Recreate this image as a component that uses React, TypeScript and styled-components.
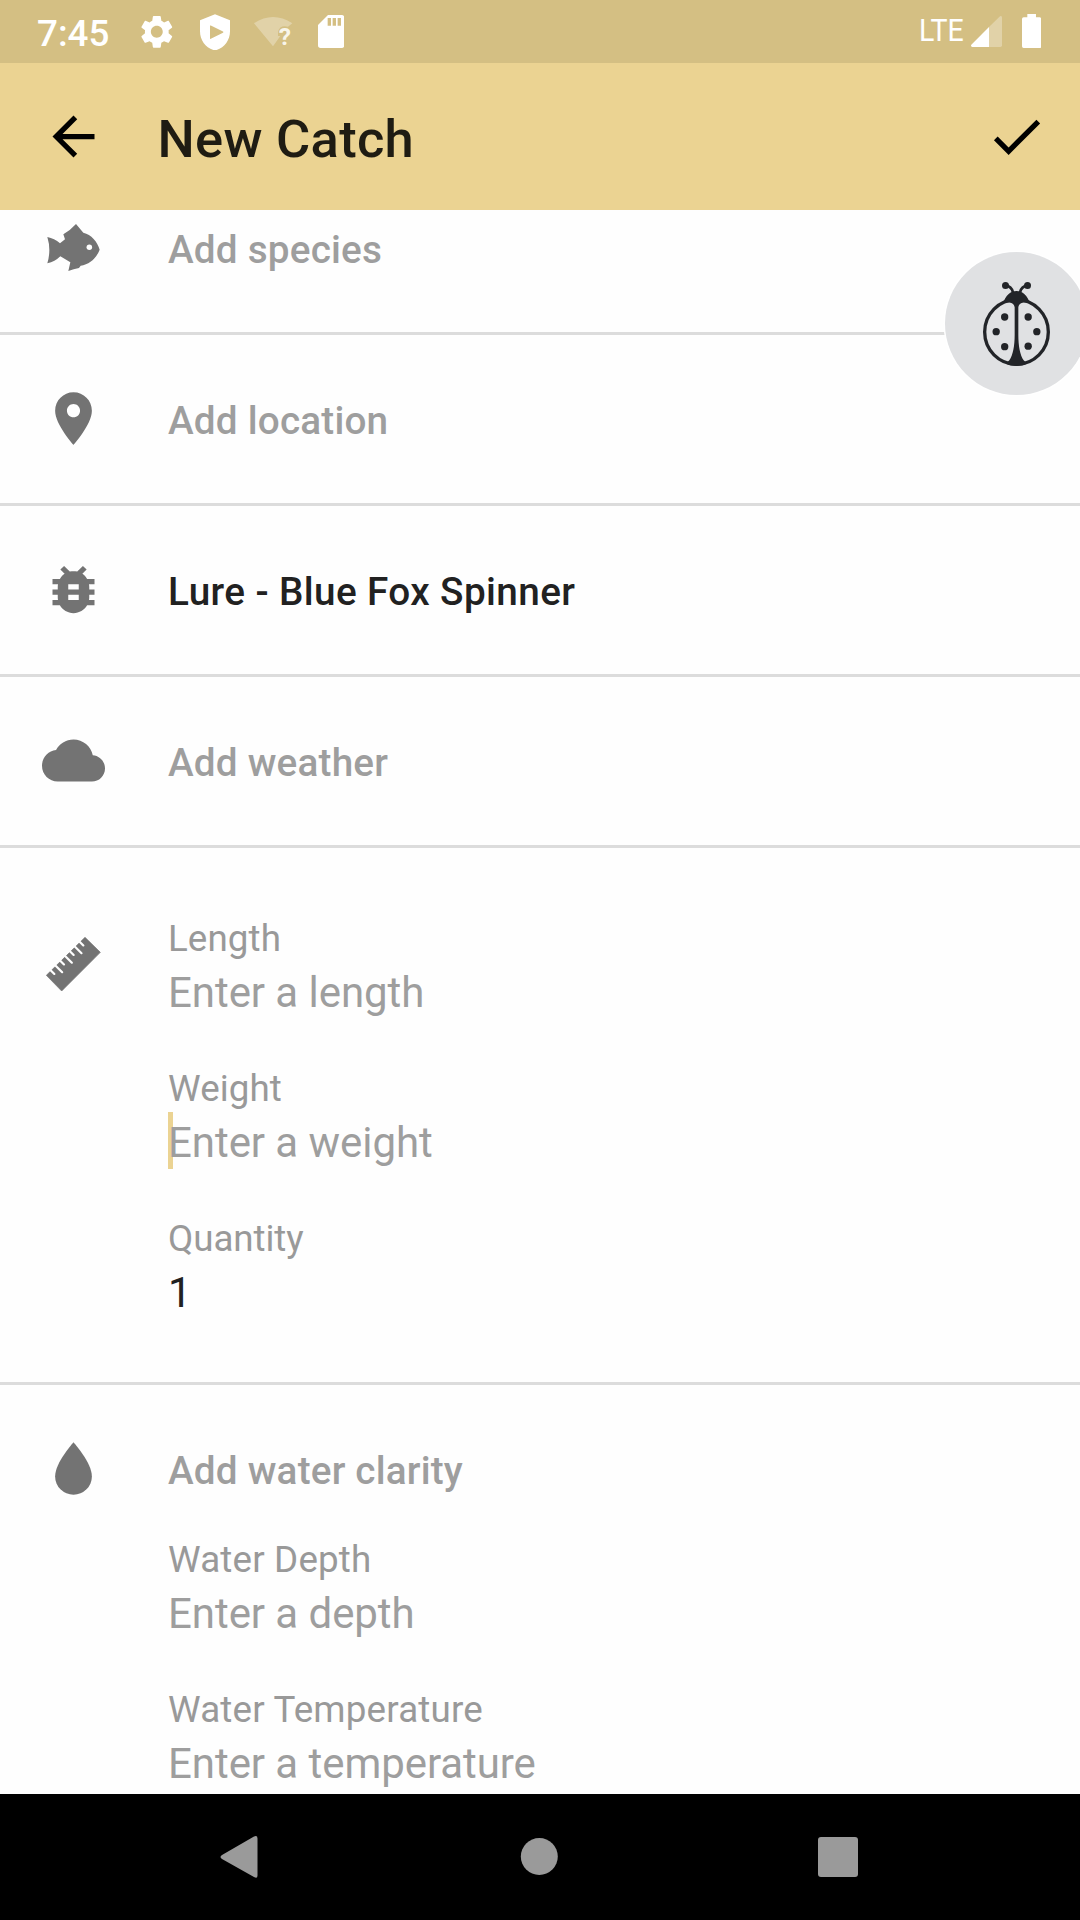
import React from 'react';
import styled, { createGlobalStyle } from 'styled-components';

const GlobalStyle = createGlobalStyle`
  html, body { margin: 0; padding: 0; background: #ffffff; }
  * { box-sizing: border-box; }
`;

const Screen = styled.div`
  position: relative;
  display: flex;
  flex-direction: column;
  width: 1080px;
  height: 1920px;
  overflow: hidden;
  background: #fefefe;
  font-family: Roboto, "Liberation Sans", sans-serif;
`;

/* Status bar */

const StatusBar = styled.header`
  display: flex;
  flex: 0 0 63px;
  align-items: flex-start;
  justify-content: space-between;
  padding: 0 38.7px 0 37px;
  background: #d4bf83;
  color: #ffffff;
`;

const StatusGroup = styled.div`
  display: flex;
  align-items: flex-start;
`;

const Clock = styled.span`
  width: 104px;
  padding-top: 12px;
  font-size: 36.75px;
  font-weight: 500;
  line-height: 43px;
`;

const Network = styled.span`
  width: 49px;
  padding-top: 12px;
  font-size: 31.5px;
  line-height: 38px;
  transform: scaleX(0.905);
  transform-origin: left top;
`;

const StatusIcon = styled.svg<{ $gap?: number; $top: number }>`
  display: block;
  flex: none;
  margin-left: ${({ $gap = 0 }) => $gap}px;
  margin-top: ${({ $top }) => $top}px;
`;

/* App bar */

const AppBar = styled.div`
  display: flex;
  flex: 0 0 147px;
  align-items: center;
  padding: 0 32.5px 0 42px;
  background: #ebd392;
`;

const Title = styled.h1`
  flex: 1;
  margin: 0;
  padding: 4px 0 0 52.5px;
  font-size: 52.5px;
  font-weight: 500;
  line-height: 62px;
  letter-spacing: 0.28px;
  color: #1f1c13;
`;

/* Form */

const Form = styled.main`
  display: flex;
  flex: 1 1 0;
  flex-direction: column;
  min-height: 0;
  overflow: hidden;
`;

const Section = styled.section<{ $first?: boolean }>`
  display: flex;
  flex: none;
  align-items: flex-start;
  gap: 63px;
  padding-left: 42px;
  margin-top: ${({ $first }) => ($first ? '-46px' : '0')};
`;

const Divider = styled.hr`
  flex: none;
  width: 100%;
  height: 3px;
  margin: 0;
  border: 0;
  background: #dcdcdc;
`;

const SectionIcon = styled.svg<{ $top?: number }>`
  display: block;
  flex: none;
  width: 63px;
  height: 63px;
  margin-top: ${({ $top = 52 }) => $top}px;
  color: #737373;
`;

const BarIcon = styled.svg`
  display: block;
  flex: none;
  width: 63px;
  height: 63px;
`;

const PickerRow = styled.div<{ $filled?: boolean }>`
  height: 168px;
  padding-top: 63px;
  font-size: 38.7px;
  font-weight: 500;
  line-height: 45px;
  letter-spacing: ${({ $filled }) => ($filled ? '0.39px' : '0.2px')};
  color: ${({ $filled }) => ($filled ? '#212121' : '#9e9e9e')};
`;

const FieldList = styled.div<{ $top?: number; $bottom?: number }>`
  display: flex;
  flex-direction: column;
  gap: 43px;
  padding: ${({ $top = 0, $bottom = 0 }) => `${$top}px 0 ${$bottom}px`};
`;

const WaterColumn = styled.div`
  display: flex;
  flex-direction: column;

  ${PickerRow} {
    height: 152px;
  }
`;

const Field = styled.label`
  display: flex;
  flex-direction: column;
  gap: 1px;
`;

const FieldLabel = styled.span<{ $tracking: number }>`
  font-size: 36.75px;
  line-height: 45px;
  letter-spacing: ${({ $tracking }) => $tracking}px;
  color: #999999;
`;

const FieldValue = styled.span<{ $filled?: boolean; $focused?: boolean }>`
  font-size: 42px;
  line-height: 61px;
  letter-spacing: -0.06px;
  color: ${({ $filled }) => ($filled ? '#212121' : '#9e9e9e')};
  background: ${({ $focused }) =>
    $focused ? 'linear-gradient(#ebd392, #ebd392) left top / 5px 57px no-repeat' : 'none'};
`;

/* Floating debug button */

const DebugBubble = styled.button`
  position: absolute;
  top: 252px;
  left: 945px;
  display: block;
  width: 143px;
  height: 143px;
  padding: 0;
  border: 0;
  border-radius: 50%;
  background: #e0e1e3;
  box-shadow: 0 0 0 1.5px #ffffff;

  svg {
    display: block;
  }
`;

/* System navigation */

const NavBar = styled.nav`
  display: flex;
  flex: 0 0 126px;
  align-items: center;
  justify-content: space-between;
  padding: 0 222px 0 219.5px;
  background: #000000;

  svg {
    display: block;
    fill: #9a9a9a;
  }
`;

const paths = {
  back: 'M20 11H7.83l5.59-5.59L12 4l-8 8 8 8 1.41-1.41L7.83 13H20v-2z',
  check: 'M9 16.17L4.83 12l-1.42 1.41L9 19 21 7l-1.41-1.41z',
  place:
    'M12 2C8.13 2 5 5.13 5 9c0 5.25 7 13 7 13s7-7.75 7-13c0-3.87-3.13-7-7-7zm0 9.5c-1.38 0-2.5-1.12-2.5-2.5s1.12-2.5 2.5-2.5 2.5 1.12 2.5 2.5-1.12 2.5-2.5 2.5z',
  bug: 'M20 8h-2.81c-.45-.78-1.07-1.45-1.82-1.96L17 4.41 15.59 3l-2.17 2.17C12.96 5.06 12.49 5 12 5s-.96.06-1.41.17L8.41 3 7 4.41l1.62 1.63C7.88 6.55 7.26 7.22 6.81 8H4v2h2.09c-.05.33-.09.66-.09 1v1H4v2h2v1c0 .34.04.67.09 1H4v2h2.81c1.04 1.79 2.97 3 5.19 3s4.15-1.21 5.19-3H20v-2h-2.09c.05-.33.09-.66.09-1v-1h2v-2h-2v-1c0-.34-.04-.67-.09-1H20V8zm-6 8h-4v-2h4v2zm0-4h-4v-2h4v2z',
  cloud:
    'M19.35 10.04C18.67 6.59 15.64 4 12 4 9.11 4 6.6 5.64 5.35 8.04 2.34 8.36 0 10.91 0 14c0 3.31 2.69 6 6 6h13c2.76 0 5-2.24 5-5 0-2.64-2.05-4.78-4.65-4.96z',
  drop: 'M12 2s-7 7.75-7 13a7 7 0 0 0 14 0c0-5.25-7-13-7-13z',
  gear: 'M19.14 12.94c.04-.3.06-.61.06-.94 0-.32-.02-.64-.07-.94l2.03-1.58c.18-.14.23-.41.12-.61l-1.92-3.32c-.12-.22-.37-.29-.59-.22l-2.39.96c-.5-.38-1.03-.7-1.62-.94l-.36-2.54c-.04-.24-.24-.41-.48-.41h-3.84c-.24 0-.43.17-.47.41l-.36 2.54c-.59.24-1.13.57-1.62.94l-2.39-.96c-.22-.08-.47 0-.59.22L2.74 8.87c-.12.21-.08.47.12.61l2.03 1.58c-.05.3-.09.63-.09.94s.02.64.07.94l-2.03 1.58c-.18.14-.23.41-.12.61l1.92 3.32c.12.22.37.29.59.22l2.39-.96c.5.38 1.03.7 1.62.94l.36 2.54c.05.24.24.41.48.41h3.84c.24 0 .44-.17.47-.41l.36-2.54c.59-.24 1.13-.56 1.62-.94l2.39.96c.22.08.47 0 .59-.22l1.92-3.32c.12-.22.07-.47-.12-.61l-2.01-1.58zM12 15.6c-1.98 0-3.6-1.62-3.6-3.6s1.62-3.6 3.6-3.6 3.6 1.62 3.6 3.6-1.62 3.6-3.6 3.6z',
};

const MaterialSectionIcon = ({ d }: { d: string }) => (
  <SectionIcon viewBox="0 0 24 24">
    <path d={d} fill="currentColor" />
  </SectionIcon>
);

const FishIcon = () => (
  <SectionIcon viewBox="36 3 189 189">
    <path
      fill="currentColor"
      d="M52 66C66 69 79 75 90 85L105 73L100 58Q122 45 138 27L160 53C184 58 202 80 209 104C200 128 179 149 152 152L147 159Q131 162 115 168L121 142L91 124Q75 140 52 145Q64 105 52 66Z"
    />
    <circle cx="178" cy="97" r="8.3" fill="#fefefe" />
  </SectionIcon>
);

const RulerIcon = () => (
  <SectionIcon $top={84} viewBox="36 36 189 189">
    <path d="M49 166L95 213L211 97L165 52Z" fill="currentColor" stroke="currentColor" strokeLinejoin="round" strokeWidth="2" />
    {[1, 2, 3, 4, 5, 6, 7].map((i) => {
      const x = 47.5 + 14.5 * i;
      const y = 165 - 14.25 * i;
      const length = i % 2 ? 11 : 20;
      return (
        <path
          key={i}
          d={`M${x - 4} ${y - 4}L${x + length} ${y + length}`}
          stroke="#fefefe"
          strokeWidth="6.6"
          strokeLinecap="round"
        />
      );
    })}
  </SectionIcon>
);

const Ladybug = () => (
  <svg width="143" height="143" viewBox="135 96 429 429" fill="#222428">
    <ellipse cx="349.5" cy="336" rx="95.5" ry="97" fill="none" stroke="#222428" strokeWidth="10" />
    <path d="M309 251C316 226 332 213 349.5 213C367 213 383 226 390 251C383 246 357 243 355 262V345C355 378 360 405 371 421L382 431C360 440 339 440 317 431L328 421C339 405 344 378 344 345V262C342 243 316 246 309 251Z" />
    <path d="M318 197C328 198 336 206 339 217M381 197C371 198 363 206 360 217" fill="none" stroke="#222428" strokeWidth="8" />
    <circle cx="316.5" cy="196.5" r="10.5" />
    <circle cx="382.5" cy="196.5" r="10.5" />
    <circle cx="314" cy="291" r="11" />
    <circle cx="384.5" cy="291" r="11" />
    <circle cx="288.5" cy="335" r="11" />
    <circle cx="410.5" cy="335" r="11" />
    <circle cx="314" cy="380" r="11" />
    <circle cx="384.5" cy="378.5" r="11" />
  </svg>
);

interface TextFieldProps {
  label: string;
  hint?: string;
  value?: string;
  focused?: boolean;
  tracking?: number;
}

const TextField = ({ label, hint, value, focused, tracking = 0.08 }: TextFieldProps) => (
  <Field>
    <FieldLabel $tracking={tracking}>{label}</FieldLabel>
    <FieldValue $filled={Boolean(value)} $focused={focused}>
      {value ?? hint}
    </FieldValue>
  </Field>
);

export default function App() {
  return (
    <>
      <GlobalStyle />
      <Screen>
        <StatusBar>
          <StatusGroup>
            <Clock>7:45</Clock>
            <StatusIcon $gap={-4} $top={11.8} width="39.6" height="39.6" viewBox="0 0 24 24" fill="#fff">
              <path d={paths.gear} />
            </StatusIcon>
            <StatusIcon $gap={23.4} $top={13.5} width="30" height="36.5" viewBox="600 40.5 90 109.5" fill="#fff">
              <path
                fillRule="evenodd"
                d="M645 41L690 59V92C690 120 672 143 645 150C618 143 600 120 600 92V59ZM630 75V115Q632 116 634 114L669 97Q671 95 669 93L634 76Q632 74 630 75Z"
              />
            </StatusIcon>
            <StatusIcon $gap={24} $top={11} width="40" height="42" viewBox="762 33 120 126">
              <path d="M762 70Q819 32 877 70L864 80Q840 74 834 95V108H841L819 139Z" fill="#fff" opacity="0.3" />
              <text
                x="836"
                y="136"
                fill="#fff"
                fillOpacity="0.85"
                fontFamily="Roboto, sans-serif"
                fontSize="74"
                fontWeight="700"
              >
                ?
              </text>
            </StatusIcon>
            <StatusIcon $gap={24} $top={15} width="26.3" height="33" viewBox="954 45 79 99" fill="#fff">
              <path
                fillRule="evenodd"
                d="M984 45H1025Q1033 45 1033 53V136Q1033 144 1025 144H962Q954 144 954 136V75ZM983 54V77H993V54ZM998 54V77H1008V54ZM1013 54V77H1023V54Z"
              />
            </StatusIcon>
          </StatusGroup>
          <StatusGroup>
            <Network>LTE</Network>
            <StatusIcon $gap={2.7} $top={16} width="31" height="31" viewBox="333 48 93 93" fill="#fff">
              <path d="M387 81L420 49Q426 46 426 53V136Q426 141 421 141H387Z" opacity="0.3" />
              <path d="M387 81V141H337Q331 140 334 134Z" />
            </StatusIcon>
            <StatusIcon $gap={20} $top={14} width="19.3" height="34" viewBox="486 42 58 102" fill="#fff">
              <path d="M502 42H528V52H539Q544 52 544 57V139Q544 144 539 144H491Q486 144 486 139V57Q486 52 491 52H502Z" />
            </StatusIcon>
          </StatusGroup>
        </StatusBar>

        <AppBar>
          <BarIcon viewBox="0 0 24 24">
            <path d={paths.back} />
          </BarIcon>
          <Title>New Catch</Title>
          <BarIcon viewBox="0 0 24 24">
            <path d={paths.check} />
          </BarIcon>
        </AppBar>

        <Form>
          <Section $first>
            <FishIcon />
            <PickerRow>Add species</PickerRow>
          </Section>
          <Divider />
          <Section>
            <MaterialSectionIcon d={paths.place} />
            <PickerRow>Add location</PickerRow>
          </Section>
          <Divider />
          <Section>
            <MaterialSectionIcon d={paths.bug} />
            <PickerRow $filled>Lure - Blue Fox Spinner</PickerRow>
          </Section>
          <Divider />
          <Section>
            <MaterialSectionIcon d={paths.cloud} />
            <PickerRow>Add weather</PickerRow>
          </Section>
          <Divider />
          <Section>
            <RulerIcon />
            <FieldList $top={68} $bottom={59}>
              <TextField label="Length" hint="Enter a length" />
              <TextField label="Weight" hint="Enter a weight" focused />
              <TextField label="Quantity" value="1" tracking={-0.08} />
            </FieldList>
          </Section>
          <Divider />
          <Section>
            <MaterialSectionIcon d={paths.drop} />
            <WaterColumn>
              <PickerRow>Add water clarity</PickerRow>
              <FieldList>
                <TextField label="Water Depth" hint="Enter a depth" tracking={0.17} />
                <TextField label="Water Temperature" hint="Enter a temperature" tracking={0.17} />
              </FieldList>
            </WaterColumn>
          </Section>
        </Form>

        <NavBar>
          <svg width="38" height="44" viewBox="0 0 38 44">
            <path d="M2 20L34 1.5Q37.5 0 37.5 3.5V40.5Q37.5 44 34 42L2 24Q-1 22 2 20Z" />
          </svg>
          <svg width="40" height="38" viewBox="0 0 40 38">
            <circle cx="21.3" cy="18.5" r="18.5" />
          </svg>
          <svg width="40" height="40" viewBox="0 0 40 40">
            <rect width="40" height="40" rx="3" />
          </svg>
        </NavBar>

        <DebugBubble aria-label="Debug">
          <Ladybug />
        </DebugBubble>
      </Screen>
    </>
  );
}
